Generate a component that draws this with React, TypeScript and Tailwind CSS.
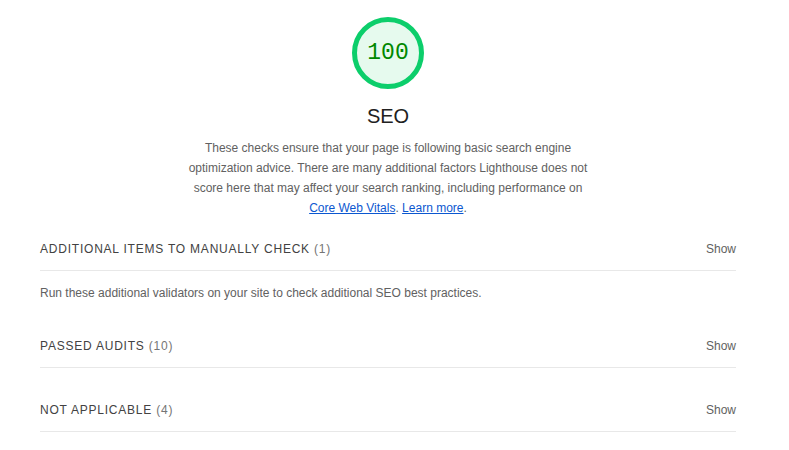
import type React from "react"

const sans = { fontFamily: '"Liberation Sans", Arial, sans-serif' }

const Gauge: React.FC<{ score: number }> = ({ score }) => (
    <div className="relative w-[76px] h-[76px]">
        <svg width="76" height="76" viewBox="0 0 76 76" className="absolute inset-0">
            <circle cx="38" cy="38" r="33.5" fill="#e6faee" stroke="#0cce6b" strokeWidth="5" />
        </svg>
        <div
            className="absolute inset-0 flex items-center justify-center text-[23px] text-[#008800]"
            style={{ fontFamily: '"Liberation Mono", "DejaVu Sans Mono", monospace' }}
        >
            {score}
        </div>
    </div>
)

const Group: React.FC<{ title: string; count: number; children?: React.ReactNode; pad: string }> = ({
    title,
    count,
    children,
    pad,
}) => (
    <div className={pad}>
        <div className="flex items-center justify-between h-[22px] border-b border-[#e8e8e8] box-content pb-[10px]">
            <div className="text-[12px] tracking-[0.065em] text-[#424242] uppercase">
                {title} <span className="text-[#757575]">({count})</span>
            </div>
            <div className="text-[12px] text-[#616161]">Show</div>
        </div>
        {children}
    </div>
)

export default function App() {
    return (
        <div className="w-[789px] h-[450px] bg-white overflow-hidden" style={sans}>
            <div className="ml-10 w-[696px]">
                <div className="flex flex-col items-center pt-[15px]">
                    <Gauge score={100} />
                    <div className="mt-[13px] text-[20px] leading-[24px] text-[#212121]">SEO</div>
                    <p className="mt-[10px] max-w-[404px] text-center text-[12px] leading-[20px] text-[#616161]">
                        These checks ensure that your page is following basic search engine optimization advice. There
                        are many additional factors Lighthouse does not score here that may affect your search ranking,
                        including performance on{" "}
                        <a className="text-[#0b57d0] underline">Core Web Vitals</a>.{" "}
                        <a className="text-[#0b57d0] underline">Learn more</a>.
                    </p>
                </div>
                <Group title="Additional items to manually check" count={1} pad="pt-[20px]">
                    <p className="pt-[14px] text-[12px] leading-[16px] text-[#616161]">
                        Run these additional validators on your site to check additional SEO best practices.
                    </p>
                </Group>
                <Group title="Passed audits" count={10} pad="pt-[34px]" />
                <Group title="Not applicable" count={4} pad="pt-[31px]" />
            </div>
        </div>
    )
}
